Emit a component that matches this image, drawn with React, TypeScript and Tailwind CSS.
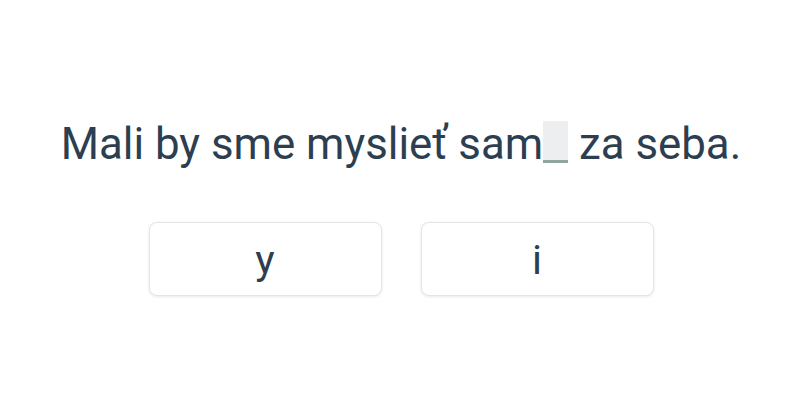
import React from 'react';

const App: React.FC = () => {
  return (
    <div className="w-[800px] h-[400px] bg-white flex flex-col items-center pt-[119px] text-[#2c3e50] font-['Roboto',sans-serif]">
      <p className="text-[43.8px] leading-[50px] whitespace-nowrap ml-[2px]">
        Mali by sme myslieť sam
        <span className="inline-block align-[-4px] w-[25px] h-[42px] bg-[#eceef0] border-b-[3px] border-[#8fa59e]"></span>{' '}
        za seba.
      </p>
      <div className="mt-[53px] flex gap-[39px] ml-[2px]">
        <button className="w-[233px] h-[74px] pt-[3px] rounded-lg border border-[#e2e4e6] bg-white shadow-[0_1px_3px_rgba(0,0,0,0.09)] text-[41px] leading-none">
          y
        </button>
        <button className="w-[233px] h-[74px] pt-[3px] rounded-lg border border-[#e2e4e6] bg-white shadow-[0_1px_3px_rgba(0,0,0,0.09)] text-[41px] leading-none">
          i
        </button>
      </div>
    </div>
  );
};

export default App;
